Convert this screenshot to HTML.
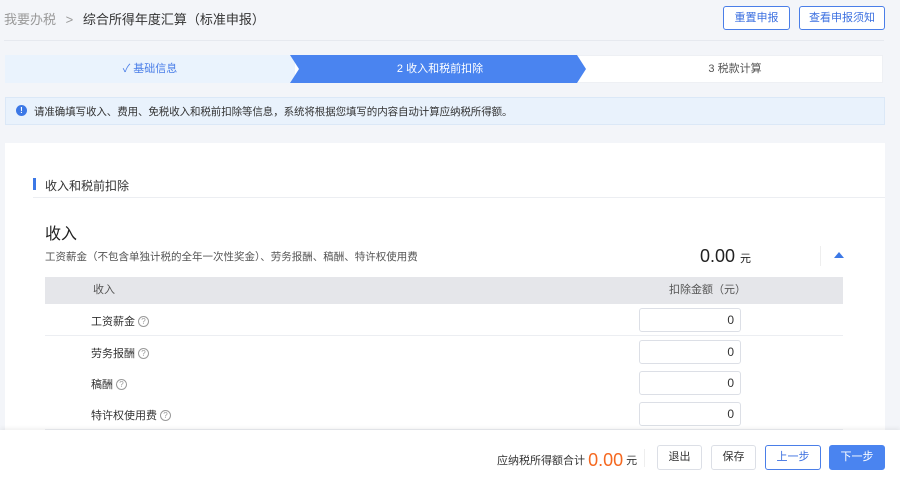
<!DOCTYPE html>
<html><head><meta charset="utf-8"><style>
*{box-sizing:border-box;margin:0;padding:0}
body{width:900px;height:479px;overflow:hidden;background:#f3f5f9;font-family:"Liberation Sans","Noto Sans CJK SC",sans-serif;color:#333;position:relative;font-size:12px}
.abs{position:absolute}
.btn{position:absolute;border:1px solid #4a7ee8;border-radius:3px;color:#3b6fe0;background:#fff;text-align:center;font-size:11px}
.q{display:inline-block;width:11px;height:11px;border:1px solid #999;border-radius:50%;font-size:8px;line-height:9px;text-align:center;color:#999;margin-left:3px;vertical-align:1px;font-style:normal}
.row{position:absolute;left:45px;width:798px;height:32px;border-bottom:1px solid #eceef2;background:#fff}
.row span.l{position:absolute;left:46px;top:9px;font-size:11px;color:#333}
.inp{position:absolute;left:594px;top:4px;width:102px;height:24px;border:1px solid #dcdfe6;border-radius:3px;text-align:right;padding-right:6px;line-height:22px;font-size:12px;color:#333}
</style></head><body>
<div class="abs" style="left:4px;top:9px;font-size:13px;color:#999">我要办税 <span style="margin:0 6px">&gt;</span> <span style="color:#333">综合所得年度汇算（标准申报）</span></div>
<div class="btn" style="left:723px;top:6px;width:67px;height:24px;line-height:22px">重置申报</div>
<div class="btn" style="left:799px;top:6px;width:86px;height:24px;line-height:22px">查看申报须知</div>
<div class="abs" style="left:4px;top:40px;width:880px;height:1px;background:#e6e9ef"></div>
<div class="abs" style="left:5px;top:55px;width:878px;height:28px;background:#fff;border:1px solid #eef0f4"></div>
<div class="abs" style="left:5px;top:55px;width:290px;height:28px;background:#eaf3fd;color:#4a7ee8;font-size:11px;line-height:28px;text-align:center">✓ 基础信息</div>
<svg class="abs" style="left:290px;top:55px" width="300" height="28"><polygon points="0,0 287,0 296,14 287,28 0,28 9,14" fill="#4a84f0"/></svg>
<div class="abs" style="left:295px;top:55px;width:290px;height:28px;line-height:28px;text-align:center;color:#fff;font-size:11px">2 收入和税前扣除</div>
<div class="abs" style="left:590px;top:55px;width:290px;height:28px;line-height:28px;text-align:center;color:#555;font-size:11px">3 税款计算</div>
<div class="abs" style="left:5px;top:97px;width:880px;height:28px;background:#e9f2fc;border:1px solid #dbe8f7"></div>
<div class="abs" style="left:16px;top:105px;width:11px;height:11px;border-radius:50%;background:#3c78e6;color:#fff;font-size:8px;line-height:11px;text-align:center;font-weight:bold">!</div>
<div class="abs" style="left:34px;top:104px;font-size:10.5px;color:#333;letter-spacing:-0.1px">请准确填写收入、费用、免税收入和税前扣除等信息，系统将根据您填写的内容自动计算应纳税所得额。</div>
<div class="abs" style="left:5px;top:143px;width:880px;height:300px;background:#fff"></div>
<div class="abs" style="left:33px;top:178px;width:3px;height:12px;background:#3c78e6"></div>
<div class="abs" style="left:45px;top:177px;font-size:12px;color:#333">收入和税前扣除</div>
<div class="abs" style="left:33px;top:197px;width:852px;height:1px;background:#eceef2"></div>
<div class="abs" style="left:45px;top:220px;font-size:16px;color:#222">收入</div>
<div class="abs" style="left:45px;top:249px;font-size:10.5px;color:#555">工资薪金（不包含单独计税的全年一次性奖金）、劳务报酬、稿酬、特许权使用费</div>
<div class="abs" style="left:700px;top:246px;font-size:18px;color:#222">0.00 <span style="font-size:11px">元</span></div>
<div class="abs" style="left:820px;top:246px;width:1px;height:20px;background:#eee"></div>
<svg class="abs" style="left:834px;top:252px" width="10" height="6"><polygon points="0,6 5,0 10,6" fill="#3c78e6"/></svg>
<div class="abs" style="left:45px;top:277px;width:798px;height:27px;background:#e5e6ea;color:#555;font-size:11px;line-height:27px"><span style="position:absolute;left:48px">收入</span><span style="position:absolute;left:624px">扣除金额（元）</span></div>
<div class="row" style="top:304px"><span class="l">工资薪金<i class="q">?</i></span><div class="inp">0</div></div>
<div class="row" style="top:336px"><span class="l">劳务报酬<i class="q">?</i></span><div class="inp">0</div></div>
<div class="row" style="top:367px"><span class="l">稿酬<i class="q">?</i></span><div class="inp">0</div></div>
<div class="row" style="top:398px"><span class="l">特许权使用费<i class="q">?</i></span><div class="inp">0</div></div>
<div class="abs" style="left:0;top:430px;width:900px;height:49px;background:#fff;box-shadow:0 -2px 4px rgba(0,0,0,.06)"></div>
<div class="abs" style="left:497px;top:450px;font-size:11px;color:#333">应纳税所得额合计 <span style="font-size:18px;color:#f5681f;vertical-align:-2px">0.00</span> 元</div>
<div class="abs" style="left:644px;top:449px;width:1px;height:18px;background:#eee"></div>
<div class="btn" style="left:657px;top:445px;width:45px;height:25px;line-height:23px;border-color:#dcdfe6;color:#333">退出</div>
<div class="btn" style="left:711px;top:445px;width:45px;height:25px;line-height:23px;border-color:#dcdfe6;color:#333">保存</div>
<div class="btn" style="left:765px;top:445px;width:56px;height:25px;line-height:23px">上一步</div>
<div class="btn" style="left:829px;top:445px;width:56px;height:25px;line-height:23px;background:#4a84f0;color:#fff;border-color:#4a84f0">下一步</div>
</body></html>
